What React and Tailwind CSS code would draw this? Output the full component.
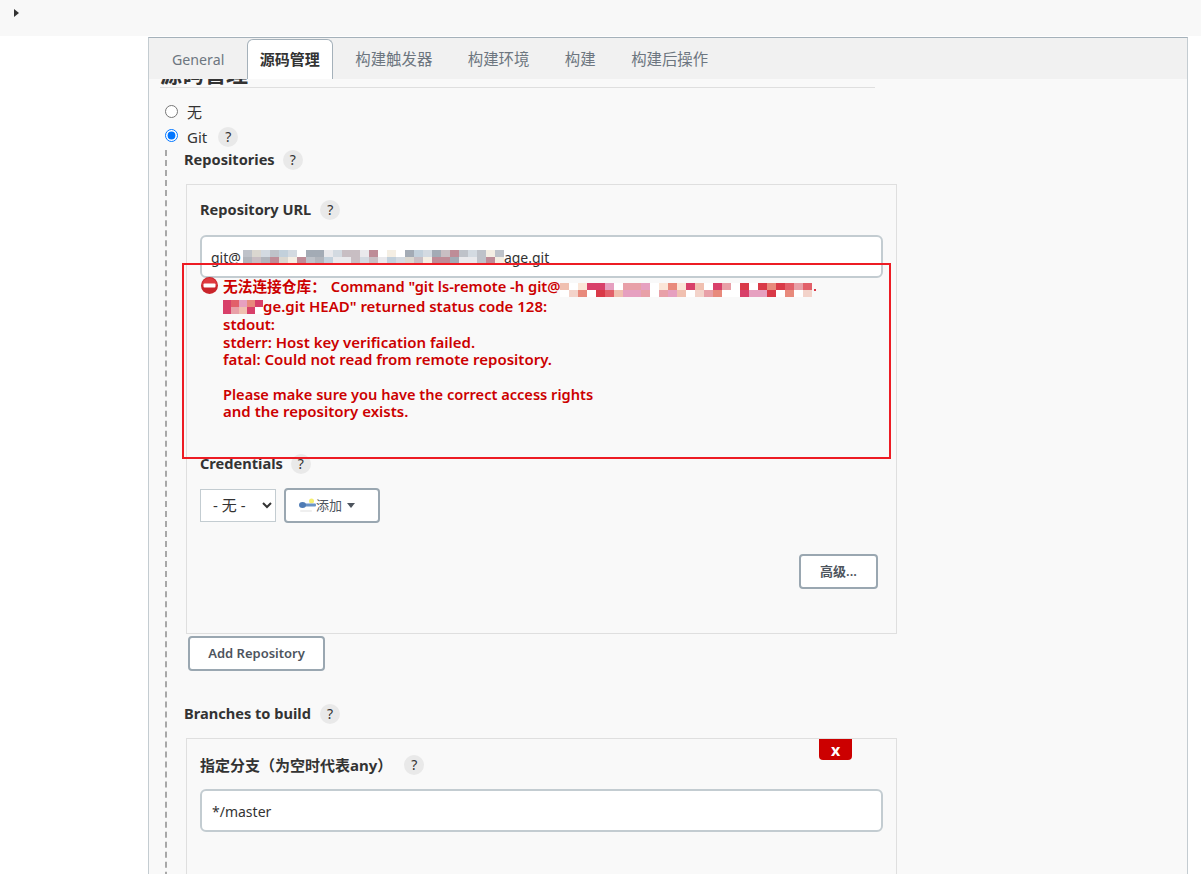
// App.jsx - Jenkins 源码管理 配置页
const FONT = '"Noto Sans", "Noto Sans CJK SC", sans-serif';

const GRAY_BITS = ["#b8bcc4", "#a9adb5", "#d6d3cc", "#c3b7bd", "#b7808c", "#cfd6de", "#f3ede0", "#9aa3ad", "#bccbd8", "#ffffff", "#e7e7ea"];
const RED_BITS = ["#d93a48", "#e2606a", "#f3d3ca", "#e8a0a8", "#ffffff", "#ffffff", "#e88a7c", "#d8406a", "#f0c0b0", "#fbe6d8", "#e6a0c0"];

// 打码区域: 随机色块
function Mosaic({ cols, rows = 2, cell = 9, h = 7, bits, seed = 7, className = "" }) {
  let n = seed;
  const cells = [];
  for (let i = 0; i < cols * rows; i++) {
    n = (n * 73 + 41) % 1009;
    cells.push(bits[n % bits.length]);
  }
  return (
    <span
      className={`inline-grid align-middle ${className}`}
      style={{ gridTemplateColumns: `repeat(${cols}, ${cell}px)`, gridAutoRows: `${h}px` }}
    >
      {cells.map((c, i) => (
        <span key={i} style={{ background: c }} />
      ))}
    </span>
  );
}

function Help({ className = "" }) {
  return (
    <span className={`inline-flex w-5 h-5 shrink-0 items-center justify-center rounded-full bg-[#e9e9e9] text-[14px] font-normal leading-none text-[#333] ${className}`}>
      ?
    </span>
  );
}

function Label({ children, help, size = "text-[14.6px]" }) {
  return (
    <div className={`flex h-5 items-center font-bold text-[#333] ${size}`}>
      <span>{children}</span>
      <Help className={help} />
    </div>
  );
}

function Btn({ children, className = "" }) {
  return (
    <button className={`flex items-center justify-center rounded-[4px] border-2 border-[#9aa7b1] bg-white pt-px text-[13px] font-semibold text-[#4d545d] ${className}`}>
      {children}
    </button>
  );
}

function KeyIcon() {
  return (
    <svg width="17" height="15" viewBox="0 0 17 15" className="shrink-0">
      <circle cx="12.5" cy="3" r="2.5" fill="#f5ef70" />
      <rect x="3" y="5.5" width="14" height="3" rx="1" fill="#6a93c6" />
      <ellipse cx="3.5" cy="7" rx="3.5" ry="3" fill="#4f7cb5" />
      <rect x="1" y="12" width="12" height="2" rx="1" fill="#efefef" />
    </svg>
  );
}

function StopIcon() {
  return (
    <svg width="17" height="17" viewBox="0 0 17 17" className="ml-px shrink-0">
      <circle cx="8.5" cy="8.5" r="8.5" fill="#c9252b" />
      <path d="M1 8.5a7.5 7.5 0 0 1 15 0z" fill="#df3a3f" />
      <rect x="2.5" y="6.5" width="12" height="4" rx="1" fill="#ffffff" />
    </svg>
  );
}

const TABS = ["General", "源码管理", "构建触发器", "构建环境", "构建", "构建后操作"];

export default function App() {
  return (
    <div className="relative h-[874px] w-[1201px] overflow-hidden bg-white" style={{ fontFamily: FONT }}>
      {/* 상단 바 */}
      <div className="flex h-9 items-start bg-[#f8f8f8] pl-[14px] pt-[9px]">
        <div className="h-0 w-0 border-y-[4px] border-l-[5px] border-y-transparent border-l-[#333]" />
      </div>

      <div className="ml-[148px] mt-px h-[837px] w-[1040px] overflow-hidden border-x border-t border-x-[#c4ccd1] border-t-[#a5b1ba] bg-[#f9f9f9]">
        {/* 탭 */}
        <div className="flex h-[41px] gap-[9.5px] bg-[#f1f1f1] pl-[10px]">
          {TABS.map((t) =>
            t === "源码管理" ? (
              <div key={t} className="mt-px flex h-10 items-center rounded-t-[6px] border-x border-t border-[#a5b1ba] bg-white px-3 text-[15px] font-semibold leading-none text-[#333]">
                {t}
              </div>
            ) : (
              <div key={t} className={`flex items-center border border-transparent px-3 pt-[3px] leading-none text-[#6d7680] ${t === "General" ? "text-[14.2px]" : "text-[15.4px]"}`}>
                {t}
              </div>
            )
          )}
        </div>

        {/* 가려진 제목 */}
        <div className="ml-[11px] flex h-[8px] w-[715px] items-end overflow-hidden">
          <span className="mb-[3px] text-[22px] font-bold leading-none text-[#333]">源码管理</span>
        </div>
        <div className="ml-[11px] h-px w-[715px] bg-[#dfdfdf]" />

        {/* 라디오 */}
        <div className="ml-4 mt-[15px] flex h-[18px] items-center text-[15px] text-[#333]">
          <input type="radio" name="scm" readOnly className="m-0 -mt-[2px] h-[13px] w-[13px]" />
          <span className="ml-[9px]">无</span>
        </div>
        <div className="ml-4 mt-[6px] flex h-5 items-center text-[15px] text-[#333]">
          <input type="radio" name="scm" readOnly checked className="m-0 -mt-[4px] h-[13px] w-[13px]" />
          <span className="ml-[9px]">Git</span>
          <Help className="ml-[11px]" />
        </div>

        {/* Git 옵션 */}
        <div className="relative ml-4 mt-[3px] border-l-2 border-dashed border-[#a8a8a8] pl-[17px]">
          <Label help="ml-[8px]">Repositories</Label>

          <div className="relative ml-[2px] mt-[14px] h-[450px] w-[711px] border border-[#dfdfdf] px-[13px] pt-[15px]">
            <Label help="ml-[9px]">Repository URL</Label>
            <div className="mt-[15px] flex h-[43px] w-[683px] items-center rounded-[6px] border-2 border-[#c3ccd1] bg-white pl-[9px] pt-px text-[14px] text-[#333]">
              git@
              <Mosaic cols={29} bits={GRAY_BITS} seed={31} className="ml-[2px] opacity-90" />
              age.git
            </div>

            {/* 오류 메시지 */}
            <div className="-mt-px flex text-[15px] font-semibold leading-[17.6px] text-[#c00]">
              <StopIcon />
              <div className="ml-[5px]">
                <div className="flex h-5 items-center whitespace-nowrap text-[14.7px]">
                  <span>无法连接仓库：</span>
                  <span className="ml-[5px]">Command &quot;git ls-remote -h git@</span>
                  <Mosaic cols={28} bits={RED_BITS} seed={11} className="mt-[6px]" />
                  <span className="ml-[2px] mt-[6px] h-[2px] w-[2px] bg-[#d93a48]" />
                </div>
                <div className="flex h-[19px] items-center whitespace-nowrap">
                  <Mosaic cols={5} cell={8} bits={RED_BITS} seed={23} />
                  <span>ge.git HEAD&quot; returned status code 128:</span>
                </div>
                <div>stdout:</div>
                <div>stderr: Host key verification failed.</div>
                <div>fatal: Could not read from remote repository.</div>
                <div className="h-[17px]" />
                <div className="text-[14.6px]">Please make sure you have the correct access rights</div>
                <div>and the repository exists.</div>
              </div>
            </div>

            <div className="mt-[33px]">
              <Label help="ml-[8px]">Credentials</Label>
            </div>
            <div className="mt-[14px] flex items-start gap-2">
              <select className="mt-px h-[33px] w-[76px] border border-[#c3ccd1] bg-white pl-2 text-[15px] text-[#333]">
                <option>- 无 -</option>
              </select>
              <Btn className="h-[35px] w-24 !justify-start pl-[13px]">
                <KeyIcon />
                <span className="font-normal">添加</span>
                <span className="ml-[5px] h-0 w-0 border-x-[4.5px] border-t-[5px] border-x-transparent border-t-[#4d545d]" />
              </Btn>
            </div>
            <div className="mr-[5px] mt-[31px] flex justify-end">
              <Btn className="h-[35px] w-[79px] font-normal">高级...</Btn>
            </div>
          </div>

          <Btn className="ml-1 mt-[2px] h-[35px] w-[137px]">Add Repository</Btn>

          <div className="mt-[33px]">
            <Label help="ml-[9px]">Branches to build</Label>
          </div>

          <div className="relative ml-[2px] mt-[14px] h-[200px] w-[711px] border border-[#dfdfdf] px-[13px] pt-4">
            <button className="absolute right-[44px] top-0 flex h-[21px] w-[33px] items-center justify-center rounded-b-[4px] bg-[#c00] text-[16px] font-bold leading-none text-white">
              x
            </button>
            <Label help="ml-[12px]" size="text-[15px]">指定分支（为空时代表any）</Label>
            <div className="mt-[14px] flex h-[43px] w-[683px] items-center rounded-[6px] border-2 border-[#c3ccd1] bg-white pl-[10px] pt-px text-[14px] text-[#333]">
              */master
            </div>
          </div>
        </div>
      </div>

      {/* 빨간 강조 테두리 */}
      <div className="absolute left-[182px] top-[263px] h-[196px] w-[709px] border-2 border-[#ed1c24]" />
    </div>
  );
}
